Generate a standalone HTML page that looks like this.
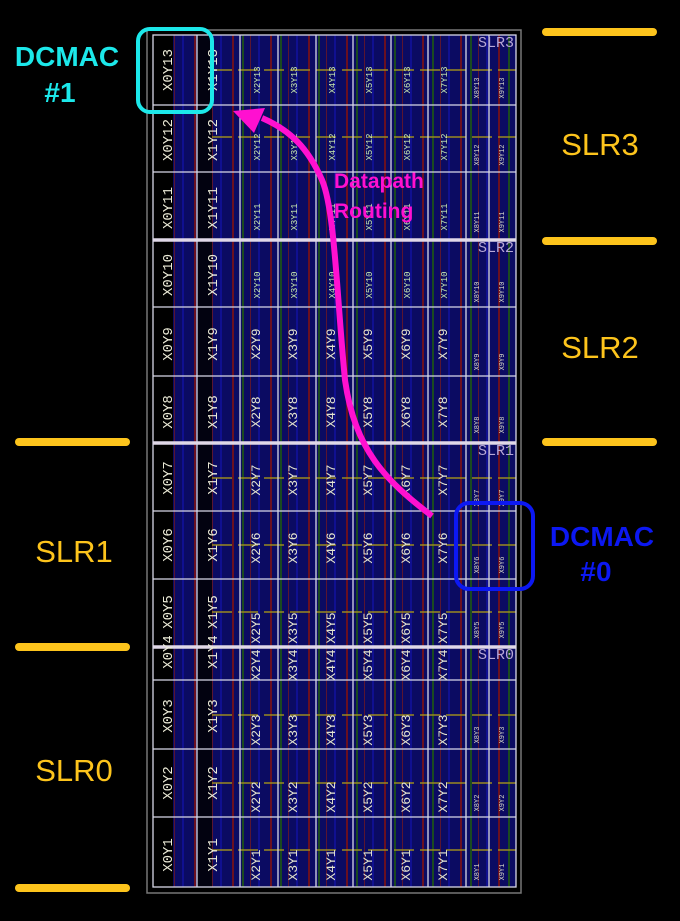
<!DOCTYPE html>
<html><head><meta charset="utf-8"><style>
html,body{margin:0;padding:0;background:#000;width:680px;height:921px;overflow:hidden}
svg{display:block}
</style></head><body>
<svg width="680" height="921" viewBox="0 0 680 921" xmlns="http://www.w3.org/2000/svg">
<defs>
<pattern id="st" x="0" y="0" width="38" height="10" patternUnits="userSpaceOnUse">
<rect width="38" height="10" fill="#0b0b62"/>
<rect x="4" width="2" height="10" fill="#6a1020"/>
<rect x="14" width="2" height="10" fill="#1a4a20"/>
<rect x="22" width="1" height="10" fill="#5a1530"/>
<rect x="30" width="2" height="10" fill="#101090"/>
</pattern>
</defs>
<rect width="680" height="921" fill="#000"/>
<rect x="147" y="30" width="374" height="863" fill="none" stroke="#777" stroke-width="1.5"/>
<rect x="153" y="35" width="363" height="852" fill="url(#st)"/>
<rect x="153" y="35" width="20" height="852" fill="#000"/>
<rect x="197" y="35" width="15" height="852" fill="#020210"/>
<g stroke="#9a8a20" stroke-width="1.5" stroke-dasharray="20 6">
<line x1="212" y1="70" x2="516" y2="70"/><line x1="212" y1="137" x2="516" y2="137"/>
<line x1="212" y1="478" x2="516" y2="478"/><line x1="212" y1="545" x2="516" y2="545"/>
<line x1="212" y1="612" x2="516" y2="612"/><line x1="212" y1="715" x2="516" y2="715"/>
<line x1="212" y1="783" x2="516" y2="783"/><line x1="212" y1="850" x2="516" y2="850"/>
</g>
<g stroke="#d8d8e8" stroke-width="1.3" fill="none">
<rect x="153" y="35" width="363" height="852"/>
<line x1="197" y1="35" x2="197" y2="887"/><line x1="240" y1="35" x2="240" y2="887"/>
<line x1="278" y1="35" x2="278" y2="887"/><line x1="316" y1="35" x2="316" y2="887"/>
<line x1="353" y1="35" x2="353" y2="887"/><line x1="391" y1="35" x2="391" y2="887"/>
<line x1="428" y1="35" x2="428" y2="887"/><line x1="466" y1="35" x2="466" y2="887"/>
<line x1="489" y1="35" x2="489" y2="887"/>
<line x1="153" y1="105" x2="516" y2="105"/><line x1="153" y1="172" x2="516" y2="172"/>
<line x1="153" y1="307" x2="516" y2="307"/><line x1="153" y1="376" x2="516" y2="376"/>
<line x1="153" y1="511" x2="516" y2="511"/><line x1="153" y1="579" x2="516" y2="579"/>
<line x1="153" y1="680" x2="516" y2="680"/><line x1="153" y1="749" x2="516" y2="749"/>
<line x1="153" y1="817" x2="516" y2="817"/>
</g>
<g stroke="#e0d8e8" stroke-width="3.5">
<line x1="153" y1="240" x2="516" y2="240"/><line x1="153" y1="443" x2="516" y2="443"/><line x1="153" y1="647" x2="516" y2="647"/>
</g>
<g fill="#b8a8d8" font-family="Liberation Mono, monospace" font-size="15">
<text x="478" y="47">SLR3</text><text x="478" y="252">SLR2</text><text x="478" y="455">SLR1</text><text x="478" y="659">SLR0</text>
</g>
<g font-family="Liberation Mono, monospace" font-size="14" fill="#ecebd8" text-anchor="middle">
<text transform="translate(172,70) rotate(-90)">X0Y13</text><text transform="translate(217,70) rotate(-90)">X1Y13</text>
<text transform="translate(172,140) rotate(-90)">X0Y12</text><text transform="translate(217,140) rotate(-90)">X1Y12</text>
<text transform="translate(172,208) rotate(-90)">X0Y11</text><text transform="translate(217,208) rotate(-90)">X1Y11</text>
<text transform="translate(172,275) rotate(-90)">X0Y10</text><text transform="translate(217,275) rotate(-90)">X1Y10</text>
<text transform="translate(172,344) rotate(-90)">X0Y9</text><text transform="translate(217,344) rotate(-90)">X1Y9</text>
<text transform="translate(172,412) rotate(-90)">X0Y8</text><text transform="translate(217,412) rotate(-90)">X1Y8</text>
<text transform="translate(172,478) rotate(-90)">X0Y7</text><text transform="translate(217,478) rotate(-90)">X1Y7</text>
<text transform="translate(172,545) rotate(-90)">X0Y6</text><text transform="translate(217,545) rotate(-90)">X1Y6</text>
<text transform="translate(172,612) rotate(-90)">X0Y5</text><text transform="translate(217,612) rotate(-90)">X1Y5</text>
<text transform="translate(172,652) rotate(-90)">X0Y4</text><text transform="translate(217,652) rotate(-90)">X1Y4</text>
<text transform="translate(172,716) rotate(-90)">X0Y3</text><text transform="translate(217,716) rotate(-90)">X1Y3</text>
<text transform="translate(172,783) rotate(-90)">X0Y2</text><text transform="translate(217,783) rotate(-90)">X1Y2</text>
<text transform="translate(172,855) rotate(-90)">X0Y1</text><text transform="translate(217,855) rotate(-90)">X1Y1</text>
</g>
<g font-family="Liberation Mono, monospace" font-size="13" fill="#e4e4d0" text-anchor="middle">
<text transform="translate(260,344) rotate(-90)">X2Y9</text><text transform="translate(297,344) rotate(-90)">X3Y9</text><text transform="translate(335,344) rotate(-90)">X4Y9</text><text transform="translate(372,344) rotate(-90)">X5Y9</text><text transform="translate(410,344) rotate(-90)">X6Y9</text><text transform="translate(447,344) rotate(-90)">X7Y9</text>
<text transform="translate(260,412) rotate(-90)">X2Y8</text><text transform="translate(297,412) rotate(-90)">X3Y8</text><text transform="translate(335,412) rotate(-90)">X4Y8</text><text transform="translate(372,412) rotate(-90)">X5Y8</text><text transform="translate(410,412) rotate(-90)">X6Y8</text><text transform="translate(447,412) rotate(-90)">X7Y8</text>
<text transform="translate(260,480) rotate(-90)">X2Y7</text><text transform="translate(297,480) rotate(-90)">X3Y7</text><text transform="translate(335,480) rotate(-90)">X4Y7</text><text transform="translate(372,480) rotate(-90)">X5Y7</text><text transform="translate(410,480) rotate(-90)">X6Y7</text><text transform="translate(447,480) rotate(-90)">X7Y7</text>
<text transform="translate(260,548) rotate(-90)">X2Y6</text><text transform="translate(297,548) rotate(-90)">X3Y6</text><text transform="translate(335,548) rotate(-90)">X4Y6</text><text transform="translate(372,548) rotate(-90)">X5Y6</text><text transform="translate(410,548) rotate(-90)">X6Y6</text><text transform="translate(447,548) rotate(-90)">X7Y6</text>
<text transform="translate(260,628) rotate(-90)">X2Y5</text><text transform="translate(297,628) rotate(-90)">X3Y5</text><text transform="translate(335,628) rotate(-90)">X4Y5</text><text transform="translate(372,628) rotate(-90)">X5Y5</text><text transform="translate(410,628) rotate(-90)">X6Y5</text><text transform="translate(447,628) rotate(-90)">X7Y5</text>
<text transform="translate(260,665) rotate(-90)">X2Y4</text><text transform="translate(297,665) rotate(-90)">X3Y4</text><text transform="translate(335,665) rotate(-90)">X4Y4</text><text transform="translate(372,665) rotate(-90)">X5Y4</text><text transform="translate(410,665) rotate(-90)">X6Y4</text><text transform="translate(447,665) rotate(-90)">X7Y4</text>
<text transform="translate(260,730) rotate(-90)">X2Y3</text><text transform="translate(297,730) rotate(-90)">X3Y3</text><text transform="translate(335,730) rotate(-90)">X4Y3</text><text transform="translate(372,730) rotate(-90)">X5Y3</text><text transform="translate(410,730) rotate(-90)">X6Y3</text><text transform="translate(447,730) rotate(-90)">X7Y3</text>
<text transform="translate(260,797) rotate(-90)">X2Y2</text><text transform="translate(297,797) rotate(-90)">X3Y2</text><text transform="translate(335,797) rotate(-90)">X4Y2</text><text transform="translate(372,797) rotate(-90)">X5Y2</text><text transform="translate(410,797) rotate(-90)">X6Y2</text><text transform="translate(447,797) rotate(-90)">X7Y2</text>
<text transform="translate(260,865) rotate(-90)">X2Y1</text><text transform="translate(297,865) rotate(-90)">X3Y1</text><text transform="translate(335,865) rotate(-90)">X4Y1</text><text transform="translate(372,865) rotate(-90)">X5Y1</text><text transform="translate(410,865) rotate(-90)">X6Y1</text><text transform="translate(447,865) rotate(-90)">X7Y1</text>
</g>
<g font-family="Liberation Mono, monospace" font-size="9" fill="#c8e8b0" text-anchor="middle">
<text transform="translate(260,80) rotate(-90)">X2Y13</text><text transform="translate(297,80) rotate(-90)">X3Y13</text><text transform="translate(335,80) rotate(-90)">X4Y13</text><text transform="translate(372,80) rotate(-90)">X5Y13</text><text transform="translate(410,80) rotate(-90)">X6Y13</text><text transform="translate(447,80) rotate(-90)">X7Y13</text>
<text transform="translate(260,147) rotate(-90)">X2Y12</text><text transform="translate(297,147) rotate(-90)">X3Y12</text><text transform="translate(335,147) rotate(-90)">X4Y12</text><text transform="translate(372,147) rotate(-90)">X5Y12</text><text transform="translate(410,147) rotate(-90)">X6Y12</text><text transform="translate(447,147) rotate(-90)">X7Y12</text>
<text transform="translate(260,217) rotate(-90)">X2Y11</text><text transform="translate(297,217) rotate(-90)">X3Y11</text><text transform="translate(335,217) rotate(-90)">X4Y11</text><text transform="translate(372,217) rotate(-90)">X5Y11</text><text transform="translate(410,217) rotate(-90)">X6Y11</text><text transform="translate(447,217) rotate(-90)">X7Y11</text>
<text transform="translate(260,285) rotate(-90)">X2Y10</text><text transform="translate(297,285) rotate(-90)">X3Y10</text><text transform="translate(335,285) rotate(-90)">X4Y10</text><text transform="translate(372,285) rotate(-90)">X5Y10</text><text transform="translate(410,285) rotate(-90)">X6Y10</text><text transform="translate(447,285) rotate(-90)">X7Y10</text>
</g>
<g font-family="Liberation Mono, monospace" font-size="7" fill="#d8d8c8" text-anchor="middle">
<text transform="translate(479,88) rotate(-90)">X8Y13</text><text transform="translate(504,88) rotate(-90)">X9Y13</text>
<text transform="translate(479,155) rotate(-90)">X8Y12</text><text transform="translate(504,155) rotate(-90)">X9Y12</text>
<text transform="translate(479,222) rotate(-90)">X8Y11</text><text transform="translate(504,222) rotate(-90)">X9Y11</text>
<text transform="translate(479,292) rotate(-90)">X8Y10</text><text transform="translate(504,292) rotate(-90)">X9Y10</text>
<text transform="translate(479,362) rotate(-90)">X8Y9</text><text transform="translate(504,362) rotate(-90)">X9Y9</text>
<text transform="translate(479,425) rotate(-90)">X8Y8</text><text transform="translate(504,425) rotate(-90)">X9Y8</text>
<text transform="translate(479,498) rotate(-90)">X8Y7</text><text transform="translate(504,498) rotate(-90)">X9Y7</text>
<text transform="translate(479,565) rotate(-90)">X8Y6</text><text transform="translate(504,565) rotate(-90)">X9Y6</text>
<text transform="translate(479,630) rotate(-90)">X8Y5</text><text transform="translate(504,630) rotate(-90)">X9Y5</text>
<text transform="translate(479,735) rotate(-90)">X8Y3</text><text transform="translate(504,735) rotate(-90)">X9Y3</text>
<text transform="translate(479,803) rotate(-90)">X8Y2</text><text transform="translate(504,803) rotate(-90)">X9Y2</text>
<text transform="translate(479,872) rotate(-90)">X8Y1</text><text transform="translate(504,872) rotate(-90)">X9Y1</text>
</g>
<g stroke="#fdc41c" stroke-width="8" stroke-linecap="round">
<line x1="546" y1="32" x2="653" y2="32"/><line x1="546" y1="241" x2="653" y2="241"/><line x1="546" y1="442" x2="653" y2="442"/>
<line x1="19" y1="442" x2="126" y2="442"/><line x1="19" y1="647" x2="126" y2="647"/><line x1="19" y1="888" x2="126" y2="888"/>
</g>
<g font-family="Liberation Sans, sans-serif" font-size="31" fill="#fdc41c" text-anchor="middle">
<text x="600" y="155">SLR3</text><text x="600" y="358">SLR2</text><text x="74" y="562">SLR1</text><text x="74" y="781">SLR0</text>
</g>
<rect x="138" y="29" width="74" height="83" rx="12" fill="none" stroke="#1ce8ea" stroke-width="4"/>
<rect x="456" y="503" width="77" height="86" rx="13" fill="none" stroke="#0c18f2" stroke-width="4"/>
<g font-family="Liberation Sans, sans-serif" font-weight="bold" font-size="28" text-anchor="middle">
<text x="67" y="66" fill="#1ce8ea">DCMAC</text><text x="60" y="102" fill="#1ce8ea">#1</text>
<text x="602" y="546" fill="#0c18f2">DCMAC</text><text x="596" y="581" fill="#0c18f2">#0</text>
</g>
<path d="M432,516 C 385,480 355,450 345,380 C 337,300 335,210 322,180 C 308,148 290,130 262,118" fill="none" stroke="#ff10d0" stroke-width="6"/>
<polygon points="233,111 265,108 254,133" fill="#ff10d0"/>
<g font-family="Liberation Sans, sans-serif" font-weight="bold" font-size="21" fill="#ff10d0">
<text x="334" y="188">Datapath</text><text x="334" y="218">Routing</text>
</g>
</svg>
</body></html>
